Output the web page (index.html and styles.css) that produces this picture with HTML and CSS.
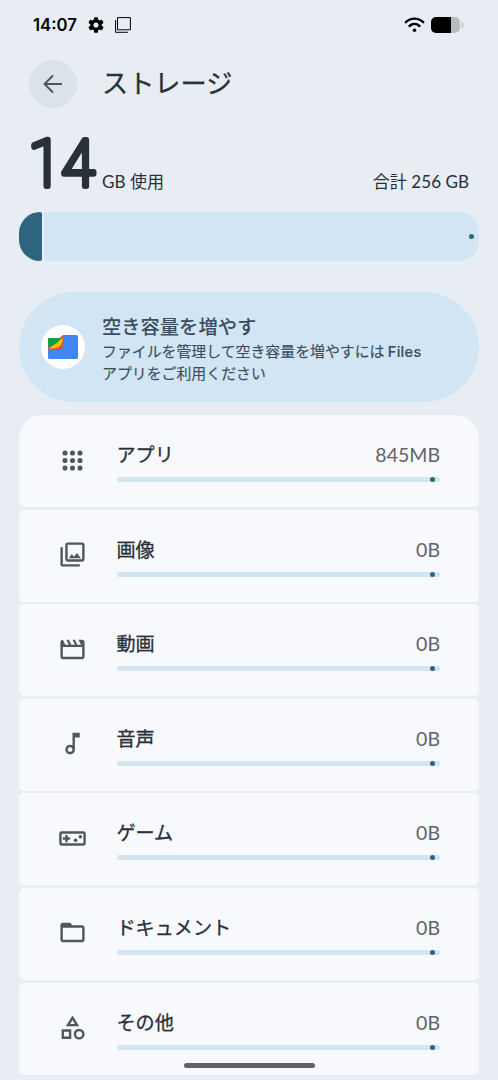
FILE: index.html
```html
<!DOCTYPE html>
<html lang="ja">
<head>
<meta charset="utf-8">
<meta name="viewport" content="width=device-width, initial-scale=1">
<title>ストレージ</title>
<link rel="stylesheet" href="styles.css">
</head>
<body>
<div class="screen">
  <header class="status">
    <span class="clock">14:07</span>
    <svg class="gear" viewBox="2 2 20 20"><path fill-rule="evenodd" d="M19.14 12.94c.04-.3.06-.61.06-.94s-.02-.64-.07-.94l2.03-1.58a.5.5 0 0 0 .12-.61l-1.92-3.32a.49.49 0 0 0-.59-.22l-2.39.96a7 7 0 0 0-1.62-.94l-.36-2.54a.48.48 0 0 0-.48-.41h-3.84a.47.47 0 0 0-.47.41l-.36 2.54c-.59.24-1.13.57-1.62.94l-2.39-.96a.48.48 0 0 0-.59.22L2.74 8.87a.48.48 0 0 0 .12.61l2.03 1.58a6 6 0 0 0-.02 1.88l-2.03 1.58a.5.5 0 0 0-.12.61l1.92 3.32c.12.22.37.29.59.22l2.39-.96c.5.38 1.03.7 1.62.94l.36 2.54c.05.24.24.41.48.41h3.84c.24 0 .44-.17.47-.41l.36-2.54a7 7 0 0 0 1.62-.94l2.39.96c.22.08.47 0 .59-.22l1.92-3.32a.47.47 0 0 0-.12-.61zM12 15.2a3.2 3.2 0 1 1 0-6.4 3.2 3.2 0 0 1 0 6.4z"/></svg>
    <svg class="copy" viewBox="0 0 16 16"><path d="M2.5.6h12.9v12.2H2.5zM.6 3v12.3h12.2" fill="none" stroke="#000" stroke-width="1"/></svg>
    <svg class="wifi" viewBox="0 0 21 16"><path d="M1.8 5.2C6.8.4 14.2.4 19.2 5.2M5.500 9c2.900-2.700 7.100-2.700 10 0" fill="none" stroke="#000" stroke-width="2.4" stroke-linecap="round"/><circle cx="10.5" cy="13.3" r="1.8"/></svg>
    <svg class="battery" viewBox="0 0 33 16"><rect width="29" height="16" rx="5" fill="#b9bbc0"/><path d="M5 0h15v16H5a5 5 0 0 1-5-5V5a5 5 0 0 1 5-5z"/><path d="M30.3 4.500c3 .5 3 6.500 0 7z" fill="#c2c5ca"/></svg>
  </header>

  <div class="titlebar">
    <span class="back"><svg viewBox="0 0 20 20"><path d="M19 10H2M10 1.500 1.500 10 10 18.500" fill="none" stroke="#50545c" stroke-width="1.900"/></svg></span>
    <h1>ストレージ</h1>
  </div>

  <section class="summary">
    <svg class="used" viewBox="0 0 72 62" role="img" aria-label="14"><text class="digit" x="-.5" y="54" textLength="66" lengthAdjust="spacingAndGlyphs">14</text></svg>
    <span class="unit">GB 使用</span>
    <span class="total">合計 256 GB</span>
  </section>
  <div class="meter"><span class="fill"></span><span class="rest"></span></div>

  <section class="promo">
    <span class="logo"><svg viewBox="0 0 30 24"><path d="M15 0h13.500Q30 0 30 1.500v21q0 1.500-1.500 1.500h-27Q0 24 0 22.500V14h9q6 0 6-7z" fill="#4285f4"/><path d="M15 0v9q0 6-7 6H0v-2z" fill="#e54b32"/><path d="M14.500 2.500v4q-2 7-9 7H1z" fill="#fbbc04"/><path d="M1 3h12.500L9 8 0 13V4q0-1 1-1z" fill="#199b48"/></svg></span>
    <div class="promo-text"><h2>空き容量を増やす</h2><p>ファイルを管理して空き容量を増やすには <span class="files">Files</span><br>アプリをご利用ください</p></div>
  </section>

  <main class="list">
    <article class="row"><svg class="icon" viewBox="0 0 24 24"><g><circle cx="5.800" cy="5.800" r="2.100"/><circle cx="12" cy="5.800" r="2.100"/><circle cx="18.200" cy="5.800" r="2.100"/><circle cx="5.800" cy="12" r="2.100"/><circle cx="12" cy="12" r="2.100"/><circle cx="18.200" cy="12" r="2.100"/><circle cx="5.800" cy="18.200" r="2.100"/><circle cx="12" cy="18.200" r="2.100"/><circle cx="18.200" cy="18.200" r="2.100"/></g></svg><div class="body"><div class="line"><span class="name">アプリ</span><span class="size">845MB</span></div><div class="bar"></div></div></article>
    <article class="row"><svg class="icon" viewBox="0 0 24 24"><path d="M20 4v12H8V4h12m0-2H8C6.900 2 6 2.900 6 4v12c0 1.100.9 2 2 2h12c1.100 0 2-.9 2-2V4c0-1.100-.9-2-2-2zm-8.500 9.670 1.690 2.260 2.480-3.100L19 15H9zM2 6v14c0 1.100.9 2 2 2h14v-2H4V6H2z"/></svg><div class="body"><div class="line"><span class="name">画像</span><span class="size">0B</span></div><div class="bar"></div></div></article>
    <article class="row"><svg class="icon" viewBox="0 0 24 24"><path d="m4 4 2 4h3L7 4h2l2 4h3l-2-4h2l2 4h3l-2-4h3c1.100 0 2 .9 2 2v12c0 1.100-.9 2-2 2H4c-1.100 0-2-.9-2-2V6c0-1.100.9-2 2-2zm0 6v8h16v-8H4z" fill-rule="evenodd"/></svg><div class="body"><div class="line"><span class="name">動画</span><span class="size">0B</span></div><div class="bar"></div></div></article>
    <article class="row"><svg class="icon" viewBox="0 0 24 24"><path fill-rule="evenodd" d="M12 3v10.550A4 4 0 1 0 14 17V7h4V3h-6zm-2 16a2 2 0 1 1 0-4 2 2 0 0 1 0 4z"/></svg><div class="body"><div class="line"><span class="name">音声</span><span class="size">0B</span></div><div class="bar"></div></div></article>
    <article class="row"><svg class="icon" viewBox="0 0 24 24"><path fill-rule="evenodd" d="M21 6H3c-1.100 0-2 .9-2 2v8c0 1.100.9 2 2 2h18c1.100 0 2-.9 2-2V8c0-1.100-.9-2-2-2zm0 10H3V8h18zM6 15h2v-2h2v-2H8V9H6v2H4v2h2z"/><circle cx="14.500" cy="13.500" r="1.500"/><circle cx="18.500" cy="10.500" r="1.500"/></svg><div class="body"><div class="line"><span class="name">ゲーム</span><span class="size">0B</span></div><div class="bar"></div></div></article>
    <article class="row"><svg class="icon" viewBox="0 0 24 24"><path fill-rule="evenodd" d="M4 4h6l2 2h8c1.100 0 2 .9 2 2v10c0 1.100-.9 2-2 2H4c-1.100 0-2-.9-2-2V6c0-1.100.9-2 2-2zm0 4v10h16V8z"/></svg><div class="body"><div class="line"><span class="name">ドキュメント</span><span class="size">0B</span></div><div class="bar"></div></div></article>
    <article class="row"><svg class="icon" viewBox="0 0 24 24"><path fill-rule="evenodd" d="m12 2-5.500 9h11zm0 3.840L13.930 9h-3.870zM17.500 13a4.500 4.500 0 1 0 0 9 4.500 4.500 0 0 0 0-9zm0 7a2.500 2.500 0 1 1 0-5 2.500 2.500 0 0 1 0 5zM3 21.500h8v-8H3zm2-6h4v4H5z"/></svg><div class="body"><div class="line"><span class="name">その他</span><span class="size">0B</span></div><div class="bar"></div></div></article>
  </main>
  <span class="home"></span>
</div>
</body>
</html>
```
FILE: styles.css
```css
* { box-sizing: border-box; }
body { margin: 0; background: #e8edf4; }
h1, h2, p { margin: 0; }
svg { display: block; flex: none; }
.screen { position: relative; width: 498px; height: 1080px; overflow: hidden; padding: 0 19px; color: #2a3037; font-family: Roboto, "Noto Sans CJK JP", sans-serif; }
.status { display: flex; align-items: center; height: 50px; padding: 0 15px 0 14px; }
.clock { width: 44px; color: #000; font: 600 16.700px/20px Inter, sans-serif; white-space: nowrap; }
.gear { width: 16px; height: 16px; margin-left: 10.500px; }
.copy { width: 16px; height: 16px; margin-left: 11px; }
.wifi { width: 21px; height: 16px; margin-left: auto; }
.battery { width: 33px; height: 16px; margin-left: 6px; }
.titlebar { display: flex; align-items: center; height: 67px; padding-left: 10px; }
.back { display: grid; place-items: center; width: 48px; height: 48px; border-radius: 50%; background: #dce2ea; }
.back svg { width: 20px; height: 20px; }
h1 { margin: 0 0 3px 25px; font: 400 26.200px/36px "Noto Sans CJK JP", sans-serif; -webkit-text-stroke: .3px #2a3037; }
.summary { display: flex; align-items: flex-end; height: 95px; padding: 0 10px 18px 10px; }
.used { width: 72px; height: 62px; margin-right: 1px; overflow: visible; }
.digit { fill: #2a3037; stroke: #2a3037; stroke-width: 6px; stroke-linejoin: round; font: 100 64px Roboto, sans-serif; }
.unit, .total { font: 400 17.100px/24px Lato, "Noto Sans CJK JP", sans-serif; white-space: nowrap; }
.total { margin-left: auto; }
.meter { position: relative; display: flex; gap: 2px; height: 49px; }
.fill { width: 23px; border-radius: 22px 2px 2px 22px; background: #2d657e; }
.rest { flex: 1; border-radius: 2px 20px 20px 2px; background: #d2e5f4; }
.meter::after { content: ""; position: absolute; right: 5px; top: 22px; width: 5px; height: 5px; border-radius: 50%; background: #2d657e; }
.promo { display: flex; align-items: center; height: 110px; margin-top: 31px; padding-left: 22px; border-radius: 55px; background: #d2e5f4; }
.logo { display: grid; place-items: center; width: 44px; height: 44px; border-radius: 50%; background: #fff; }
.logo svg { width: 30px; height: 24px; }
.promo-text { margin-left: 17px; padding-top: 2px; color: #3c4d60; }
h2 { font: 500 19.300px/27px "Noto Sans CJK JP", sans-serif; }
.promo p { font: 400 14.900px/21px "Noto Sans CJK JP", sans-serif; white-space: nowrap; -webkit-text-stroke: .15px #3c4d60; }
.files { font-family: Inter, sans-serif; font-weight: 500; font-size: 14.500px; letter-spacing: .3px; }
.list { display: flex; flex-direction: column; gap: 2.600px; margin-top: 13px; }
.row { display: flex; flex: none; height: 92px; padding: 0 39px 0 39.500px; border-radius: 5px; background: #f7f9fd; }
.row:first-child { border-radius: 24px 24px 5px 5px; }
.icon { width: 29px; height: 29px; margin: 30.500px 0 0 -.5px; fill: #50575f; }
.body { flex: 1; margin-left: 29.500px; padding-top: 25px; }
.line { display: flex; justify-content: space-between; height: 28px; line-height: 28px; }
.name { font: 400 19.100px/28px "Noto Sans CJK JP", sans-serif; -webkit-text-stroke: .3px #2a3037; }
.size { color: #60646a; font: 400 19.500px/29px Lato, sans-serif; }
.bar { position: relative; height: 5px; margin-top: 9px; border-radius: 2px; background: #d2e5f1; }
.bar::after { content: ""; position: absolute; right: 5px; top: 0; width: 5px; height: 5px; border-radius: 50%; background: #2d657e; }
.home { position: absolute; left: 184px; top: 1063px; width: 131px; height: 5px; border-radius: 3px; background: #626468; }
```
